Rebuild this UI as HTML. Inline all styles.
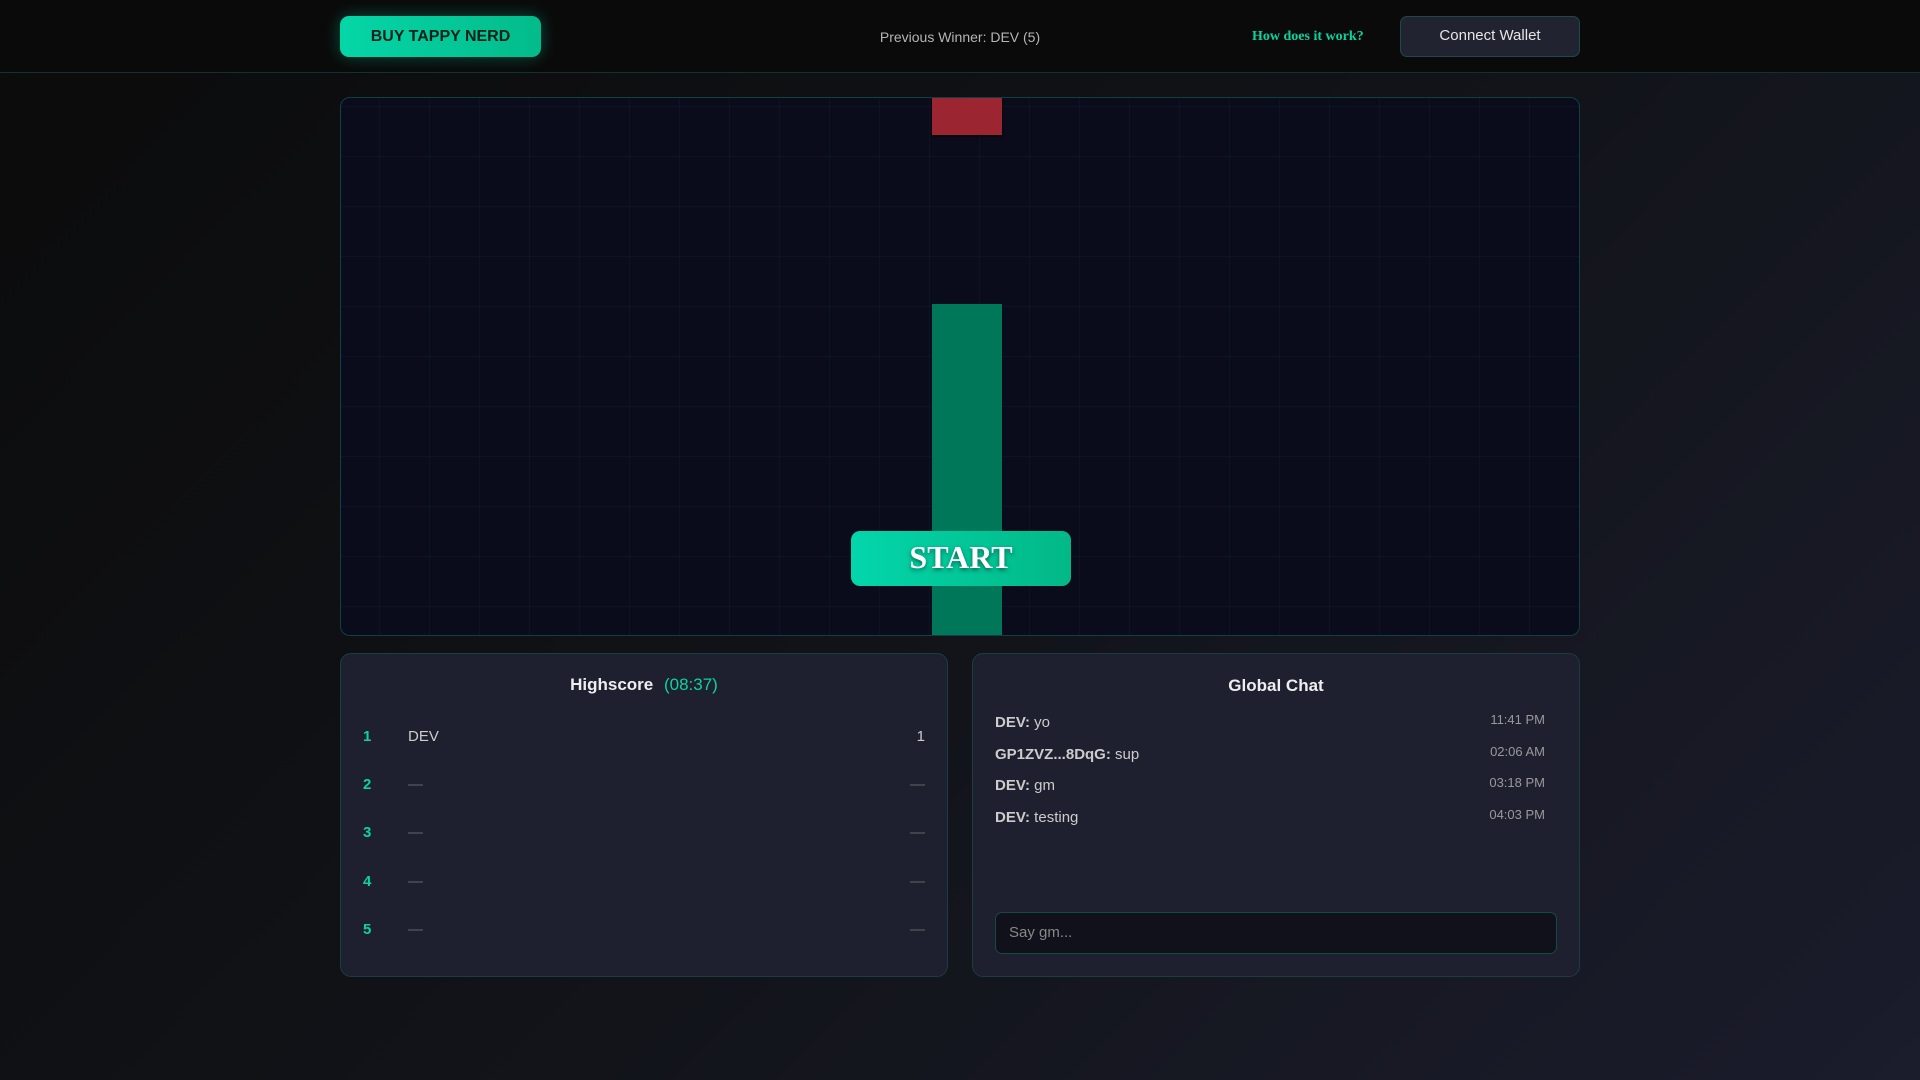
<!DOCTYPE html>
<html><head><style>
*{box-sizing:border-box;margin:0;padding:0}
body{width:1920px;height:1080px;overflow:hidden;font-family:"Liberation Sans",sans-serif;background:linear-gradient(135deg,#0b0b0b 0%,#111318 50%,#1b1c2c 100%);position:relative;color:#ddd}
.hdr{position:absolute;left:0;top:0;width:1920px;height:73px;background:#0a0a0a;border-bottom:1px solid #0f3330}
.buy{position:absolute;left:340px;top:16px;width:201px;height:41px;border-radius:9px;background:linear-gradient(90deg,#05d6a8,#03bb8a);color:#082018;font-weight:bold;font-size:16px;text-align:center;line-height:42px;box-shadow:0 0 16px rgba(5,214,168,.35)}
.prev{position:absolute;left:0;width:1920px;top:29px;text-align:center;font-size:14px;color:#b5b5b5}
.how{position:absolute;left:1252px;top:29px;font-family:"Liberation Serif",serif;font-weight:bold;font-size:14px;color:#0bd3a0}
.cw{position:absolute;left:1400px;top:16px;width:180px;height:41px;border-radius:7px;background:#222331;border:1px solid #1c4a48;color:#e5e5e5;font-size:15px;text-align:center;line-height:38px}
.game{position:absolute;left:340px;top:97px;width:1240px;height:539px;border:1px solid #0f4043;border-radius:10px;overflow:hidden;background-color:#0b0c1b;background-image:linear-gradient(rgba(20,70,80,.13) 1px,transparent 1px),linear-gradient(90deg,rgba(20,70,80,.13) 1px,transparent 1px);background-size:50px 50px;background-position:-12px 8px}
.red{position:absolute;left:591px;top:0;width:70px;height:37px;background:#9b2632;box-shadow:0 1px 2px #000}
.grn{position:absolute;left:591px;top:206px;width:70px;height:340px;background:#01775a}
.start{position:absolute;left:510px;top:433px;width:220px;height:55px;border-radius:9px;background:linear-gradient(90deg,#03d6ab,#02b887);color:#fff;font-family:"Liberation Serif",serif;font-weight:bold;font-size:32px;text-align:center;line-height:52px;text-shadow:0 2px 4px rgba(0,0,0,.5)}
.panel{position:absolute;top:653px;width:608px;height:324px;border:1px solid #1b3d40;border-radius:11px;background:#1f202f}
.title{position:absolute;top:22px;width:100%;text-align:center;font-weight:bold;font-size:17px;color:#eee}
.row{position:absolute;left:22px;right:22px;font-size:15px}
.row .r{position:absolute;left:0;color:#0bd3a0;font-weight:bold}
.row .n{position:absolute;left:45px;color:#ccc}
.row .s{position:absolute;right:0;color:#ccc}
.row .d{color:#666}
.msg{position:absolute;left:22px;font-size:15px;color:#ccc}
.msg b{color:#ccc}
.t{position:absolute;right:34px;font-size:13px;color:#999}
.inp{position:absolute;left:22px;top:258px;width:562px;height:42px;border-radius:7px;background:#10111a;border:1px solid #164a44;color:#888;font-size:15px;line-height:40px;padding-left:13px}
</style></head><body>
<div class="hdr">
<div class="buy">BUY TAPPY NERD</div>
<div class="prev">Previous Winner: DEV (5)</div>
<div class="how">How does it work?</div>
<div class="cw">Connect Wallet</div>
</div>
<div class="game">
<div class="red"></div><div class="grn"></div>
<div class="start">START</div>
</div>
<div class="panel" style="left:340px">
<div class="title" style="top:21px">Highscore <span style="color:#0bd3a0;font-weight:normal;margin-left:6px">(08:37)</span></div>
<div class="row" style="top:74px"><span class="r">1</span><span class="n">DEV</span><span class="s">1</span></div>
<div class="row" style="top:122px"><span class="r">2</span><span class="n d">—</span><span class="s d">—</span></div>
<div class="row" style="top:170px"><span class="r">3</span><span class="n d">—</span><span class="s d">—</span></div>
<div class="row" style="top:219px"><span class="r">4</span><span class="n d">—</span><span class="s d">—</span></div>
<div class="row" style="top:267px"><span class="r">5</span><span class="n d">—</span><span class="s d">—</span></div>
</div>
<div class="panel" style="left:972px">
<div class="title">Global Chat</div>
<div class="msg" style="top:60px"><b>DEV:</b> yo</div><div class="t" style="top:58px">11:41 PM</div>
<div class="msg" style="top:92px"><b>GP1ZVZ...8DqG:</b> sup</div><div class="t" style="top:90px">02:06 AM</div>
<div class="msg" style="top:123px"><b>DEV:</b> gm</div><div class="t" style="top:121px">03:18 PM</div>
<div class="msg" style="top:155px"><b>DEV:</b> testing</div><div class="t" style="top:153px">04:03 PM</div>
<div class="inp">Say gm...</div>
</div>
</body></html>
